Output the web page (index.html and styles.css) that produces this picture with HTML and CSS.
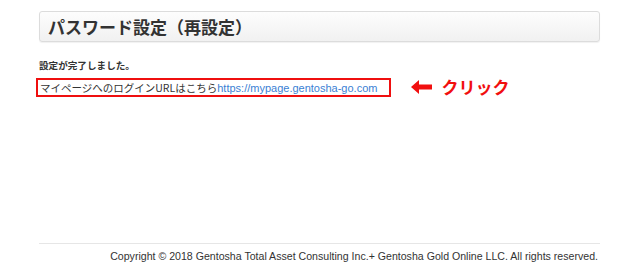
FILE: index.html
```html
<!DOCTYPE html>
<html lang="ja">
<head>
<meta charset="utf-8">
<title>パスワード設定（再設定）</title>
<link rel="stylesheet" href="styles.css">
</head>
<body>
<div class="page">
  <main class="main">
    <h1 class="title">パスワード設定（再設定）</h1>
    <p class="done">設定が完了しました。</p>
    <div class="row">
      <p class="login">マイページへのログインURLはこちら<a href="#" class="link">https://mypage.gentosha-go.com</a></p>
      <div class="note">
        <svg class="arrow" width="22" height="14" viewBox="0 0 22 14"><path d="M0 7 L8 0 L8 4.5 L21 4.5 L21 9.5 L8 9.5 L8 14 Z" fill="#f10f0f"/></svg>
        <span class="click">クリック</span>
      </div>
    </div>
  </main>
  <footer class="footer">Copyright © 2018 Gentosha Total Asset Consulting Inc.+ Gentosha Gold Online LLC. All rights reserved.</footer>
</div>
</body>
</html>
```
FILE: styles.css
```css
html, body { margin: 0; padding: 0; background: #fff; }
body { font-family: "Liberation Sans", Arial, "Noto Sans CJK JP", sans-serif; color: #333; }
.page { width: 561px; margin-left: 39px; height: 268px; display: flex; flex-direction: column; box-sizing: border-box; padding-top: 11px; }
.main { flex: 1; }
.title { margin: 0; height: 31px; box-sizing: border-box; border: 1px solid #dcdcdc; border-radius: 3px; background: linear-gradient(#fdfdfd, #f1f1f1); box-shadow: 0 1px 1px rgba(0,0,0,0.06); font-size: 17px; font-weight: bold; line-height: 29px; padding-left: 8px; color: #333; font-family: "Noto Sans CJK JP", sans-serif; }
.done { margin: 17px 0 0 0; font-size: 9.6px; font-weight: bold; line-height: 12px; font-family: "Noto Sans CJK JP", sans-serif; }
.row { display: flex; align-items: center; margin-top: 6px; margin-left: -3px; }
.login { margin: 0; border: 2px solid #ef0f0f; padding: 0 12px 0 2px; height: 19px; box-sizing: border-box; font-size: 10.5px; line-height: 15px; color: #333; font-family: "Noto Sans CJK JP", sans-serif; }
.link { color: #3b7fd4; text-decoration: none; font-family: "Liberation Sans", Arial, sans-serif; font-size: 11px; }
.note { display: flex; align-items: center; margin-left: 20px; gap: 8px; }
.click { color: #f10f0f; font-weight: bold; font-size: 17px; line-height: 20px; font-family: "Noto Sans CJK JP", sans-serif; }
.footer { border-top: 1px solid #e6e6e6; text-align: right; font-size: 10.6px; line-height: 12px; padding: 6px 2px 6px 0; color: #333; }
```
